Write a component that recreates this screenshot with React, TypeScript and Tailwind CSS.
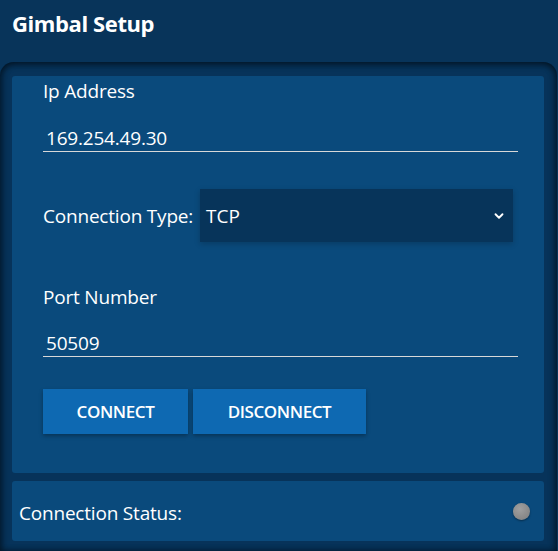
import { ChevronDown } from 'lucide-react'

export default function App() {
  return (
    <div className="w-[558px] h-[551px] overflow-hidden bg-[#08345a] text-white font-['Open_Sans',sans-serif]">
      {/* Header */}
      <div className="h-[62px] px-3 pt-[8px]">
        <h1 className="text-[22px] font-bold leading-[30px] tracking-[-0.4px]">Gimbal Setup</h1>
      </div>

      {/* Outer frame */}
      <div className="mr-[1px] rounded-t-[14px] bg-[#07335a] shadow-[inset_0_3px_6px_rgba(0,0,0,0.35),inset_-3px_0_6px_rgba(0,0,0,0.3),inset_3px_0_6px_rgba(0,0,0,0.3)] px-3 pt-[14px] pb-[10px] flex flex-col gap-2">
        {/* Settings panel */}
        <div className="w-[532px] h-[397px] rounded-[3px] bg-[#0a4a7c] pl-[31px] pr-[26px] pt-[2px]">
          <div className="text-[19px] leading-[26px] tracking-[-0.2px]">Ip Address</div>
          <div className="mt-[21px] border-b border-[#d8d8d8] h-[27px] pl-[3px] text-[19px] leading-[26px] tracking-[-0.2px]">169.254.49.30</div>

          <div className="mt-[37px] flex items-center h-[53px]">
            <span className="text-[19px] leading-[26px] tracking-[-0.2px] w-[157px] shrink-0">Connection Type:</span>
            <div className="flex-1 h-[53px] mr-[5px] bg-[#07345a] shadow-[0_2px_6px_rgba(0,0,0,0.2)] flex items-center justify-between pl-[6px] pr-[7px]">
              <span className="text-[19px] leading-[26px]">TCP</span>
              <ChevronDown className="w-[14px] h-[14px]" strokeWidth={3.2} />
            </div>
          </div>

          <div className="mt-[42px] text-[19px] leading-[26px] tracking-[-0.2px]">Port Number</div>
          <div className="mt-[20px] border-b border-[#d8d8d8] h-[27px] pl-[3px] text-[19px] leading-[26px] tracking-[-0.2px]">50509</div>

          <div className="mt-[32px] flex gap-[5px]">
            <button className="w-[145px] h-[45px] bg-[#0e69b2] shadow-[0_2px_4px_rgba(0,0,0,0.3)] text-[17px] font-semibold tracking-[-0.4px]">CONNECT</button>
            <button className="w-[173px] h-[45px] bg-[#0e69b2] shadow-[0_2px_4px_rgba(0,0,0,0.3)] text-[17px] font-semibold tracking-[-0.4px]">DISCONNECT</button>
          </div>
        </div>

        {/* Status panel */}
        <div className="w-[532px] h-[60px] rounded-[3px] bg-[#0a4a7c] flex items-center justify-between pl-[7px] pr-[14px]">
          <span className="text-[19px] leading-[26px] tracking-[-0.2px] mt-[4px]">Connection Status:</span>
          <div className="w-[17px] h-[17px] rounded-full bg-[radial-gradient(circle_at_40%_35%,#a0a0a0,#7c7c7c)] shadow-[0_1px_2px_rgba(0,0,0,0.4)]" />
        </div>
      </div>
    </div>
  )
}
